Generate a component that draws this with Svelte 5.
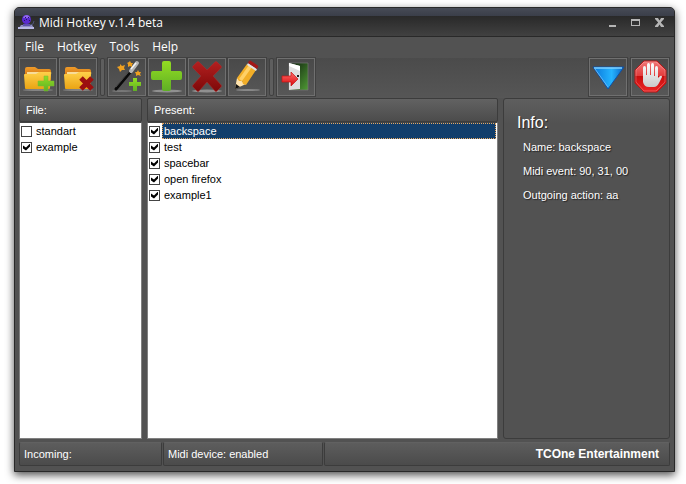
<script>
  let menus = ['File', 'Hotkey', 'Tools', 'Help'];

  let files = $state([
    { name: 'standart', on: false },
    { name: 'example', on: true }
  ]);

  let presets = $state([
    { name: 'backspace', on: true, event: '90, 31, 00', action: 'aa' },
    { name: 'test', on: true, event: '', action: '' },
    { name: 'spacebar', on: true, event: '', action: '' },
    { name: 'open firefox', on: true, event: '', action: '' },
    { name: 'example1', on: true, event: '', action: '' }
  ]);

  let selected = $state(0);
  let current = $derived(presets[selected]);
  let enabled = $state(true);
</script>

{#snippet folder()}
  <ellipse cx="19" cy="32" rx="15" ry="1" fill="#999" opacity=".7" />
  <path d="M6 11q0-2 2-2h8l3 2h11q2 0 2 2v9H6z" fill="url(#flap)" />
  <path d="M8 14h23v3H8z" fill="#f8dc9a" />
  <path d="M5 17q0-1 1-1h11l3-2h11q2 0 1 2l-1 14q0 1-1 1H7q-1 0-1-1z" fill="url(#gold)" />
{/snippet}

<svg class="defs" aria-hidden="true">
  <defs>
    <linearGradient id="flap" x2="0" y2="1"><stop stop-color="#ef9b28" /><stop offset="1" stop-color="#c76810" /></linearGradient>
    <linearGradient id="gold" x2="0" y2="1"><stop stop-color="#ffd04a" /><stop offset="1" stop-color="#eaa414" /></linearGradient>
    <linearGradient id="green" x2="0" y2="1"><stop stop-color="#93dd22" /><stop offset="1" stop-color="#5faf25" /></linearGradient>
    <linearGradient id="red" x2="0" y2="1"><stop stop-color="#b32020" /><stop offset="1" stop-color="#7d0808" /></linearGradient>
    <linearGradient id="blue" x2="1" y2="0"><stop stop-color="#0874d8" /><stop offset=".6" stop-color="#25b4ff" /><stop offset="1" stop-color="#0b62c4" /></linearGradient>
    <linearGradient id="stop" x2="0" y2="1"><stop stop-color="#f07878" /><stop offset=".48" stop-color="#e33b3b" /><stop offset=".5" stop-color="#c90d0d" /><stop offset="1" stop-color="#ed2525" /></linearGradient>
    <linearGradient id="palm" x2="0" y2="1"><stop stop-color="#fff" /><stop offset="1" stop-color="#c9c9c9" /></linearGradient>
    <linearGradient id="exit" x2="1" y2="1"><stop stop-color="#0c1a0c" /><stop offset="1" stop-color="#4f9a34" /></linearGradient>
    <linearGradient id="arrow" x2="0" y2="1"><stop stop-color="#ff6b6b" /><stop offset="1" stop-color="#d90c0c" /></linearGradient>
  </defs>
</svg>

<div class="desktop">
  <div class="window">
    <header class="titlebar">
      <svg class="logo" width="17" height="16" viewBox="0 0 17 16" aria-hidden="true">
        <path d="M3 11h11l2 3H1z" fill="#8f8fc4" />
        <path d="M0 13h16v2H0z" fill="#b9b9e6" />
        <path d="M12 11q4 0 4-4" fill="none" stroke="#4d5578" />
        <path d="M5 10h7v2H5z" fill="#5d4fae" />
        <circle cx="8.500" cy="5.500" r="4.500" fill="#5a2bd0" />
        <path d="M5 4q1-3 4-3 2 0 3 3z" fill="#8f68ee" />
        <path d="M7 3h1v1H7zM10 3h1v1h-1zM6 6h1v1H6zM8 5h1v1H8zM11 6h1v1h-1z" fill="#271064" />
      </svg>
      <h1>Midi Hotkey v.1.4 beta</h1>
      <div class="controls">
        <button aria-label="Minimize"><svg width="9" height="9" viewBox="0 0 9 9"><path d="M1 7h7v2H1z" fill="#b5b5b5" /></svg></button>
        <button aria-label="Maximize"><svg width="9" height="9" viewBox="0 0 9 9"><path d="M0 1h9v7H0zM1 3v4h7V3z" fill="#b5b5b5" fill-rule="evenodd" /></svg></button>
        <button aria-label="Close"><svg width="11" height="9" viewBox="0 0 11 9"><path d="M1 0h3l1.500 2.500L7 0h3v1L6.800 4.500 10 8v1H7L5.500 6.500 4 9H1V8l3.200-3.500L1 1z" fill="#b5b5b5" /></svg></button>
      </div>
    </header>

    <nav class="menu">
      {#each menus as item}
        <button>{item}</button>
      {/each}
    </nav>

    <div class="toolbar">
      <button class="tool" aria-label="Add file">
        <svg viewBox="0 0 38 38">
          {@render folder()}
          <path d="M25 18h4v5h6v5h-6v5h-4v-5h-6v-5h6z" fill="url(#green)" stroke="#79bb36" stroke-width=".5" />
        </svg>
      </button>
      <button class="tool" aria-label="Delete file">
        <svg viewBox="0 0 38 38">
          {@render folder()}
          <path d="M22 20l11 11M33 20L22 31" stroke="#9c1010" stroke-width="5" />
        </svg>
      </button>
      <span class="sep"></span>
      <button class="tool" aria-label="Hotkey wizard">
        <svg viewBox="0 0 38 38">
          <ellipse cx="14" cy="33" rx="10" ry="1" fill="#999" opacity=".5" />
          <path d="M8 31L29 6" stroke="#0a0a0a" stroke-width="3" stroke-linecap="round" />
          <path d="M8 29L24 10" stroke="#555" stroke-width=".8" />
          <path d="M23 13L29 5" stroke="#b4b4b4" stroke-width="4" stroke-linecap="round" />
          <path d="M23 11L28 5" stroke="#f4f4f4" stroke-width="1.500" />
          <path d="M12 6l2 2 3-1-1 3 1 2-3 0-2 2-1-3-2-2 3-1zM22 3l1 2 2 0-1 2 0 2-2-1-2 1 0-3-1-1 2-1zM30 12l1 2 2 0-1 2 1 2-3-1-2 1 0-2-1-2 2 0z" fill="#eea020" />
          <path d="M25 20h4v4h4v4h-4v5h-4v-5h-4v-4h4z" fill="url(#green)" />
        </svg>
      </button>
      <button class="tool" aria-label="Add hotkey">
        <svg viewBox="0 0 38 38">
          <ellipse cx="19" cy="33" rx="15" ry="1.500" fill="#aaa" opacity=".7" />
          <path d="M16 3h5q2 0 2 2v8h9q2 0 2 2v5q0 2-2 2h-9v9q0 2-2 2h-5q-2 0-2-2v-9H5q-2 0-2-2v-5q0-2 2-2h9V5q0-2 2-2z" fill="url(#green)" />
        </svg>
      </button>
      <button class="tool" aria-label="Delete hotkey">
        <svg viewBox="0 0 38 38">
          <ellipse cx="19" cy="33" rx="15" ry="1.500" fill="#aaa" opacity=".7" />
          <path d="M9 4q1-1 2 0l8 8 8-8q1-1 2 0l4 4q1 1 0 2l-8 8 8 9q1 1 0 2l-4 4q-1 1-2 0l-8-9-8 9q-1 1-2 0l-4-4q-1-1 0-2l8-9-8-8q-1-1 0-2z" fill="url(#red)" stroke="#b32a2a" stroke-width=".5" />
        </svg>
      </button>
      <button class="tool" aria-label="Edit hotkey">
        <svg viewBox="0 0 38 38">
          <ellipse cx="20" cy="32" rx="12" ry="1" fill="#aaa" opacity=".6" />
          <path d="M7 31L9 20l9 6z" fill="#ffe3ad" />
          <path d="M7 31l1-5 4 3z" fill="#111" />
          <path d="M9 20L19 6l9 6-10 15-3-1-1-3-3 0z" fill="#f2ae28" />
          <path d="M11 21L21 7l3 2-10 14z" fill="#ffd067" />
          <path d="M19 7l1-2 9 6-1 2z" fill="#e2e2e2" />
          <path d="M20 5l1-2q1-1 2 0l6 4q2 1 1 2l-1 2z" fill="#a31717" />
        </svg>
      </button>
      <span class="sep"></span>
      <button class="tool" aria-label="Exit">
        <svg viewBox="0 0 38 38">
          <path d="M12 5h19v27H12z" fill="url(#exit)" stroke="#777" stroke-width=".7" />
          <path d="M12 5l11 3v23l-11 1z" fill="#dedede" />
          <path d="M12 5l11 3v5L12 8z" fill="#fff" />
          <path d="M20 17h2v2h-2z" fill="#222" />
          <path d="M5 18h9v-4l7 7-7 7v-4H5z" fill="url(#arrow)" stroke="#c51313" stroke-width=".7" />
        </svg>
      </button>
      <div class="right">
        <button class="tool" aria-label="Minimize to tray">
          <svg viewBox="0 0 38 38">
            <path d="M4 9h31L19 31z" fill="url(#blue)" stroke="#0e50a5" />
            <path d="M5 10h28" stroke="#7fd0ff" stroke-width="1.500" />
            <path d="M6 11L19 29" stroke="#64b6f5" />
          </svg>
        </button>
        <button class="tool" aria-label="Stop" onclick={() => enabled = !enabled}>
          <svg viewBox="0 0 38 38">
            <path d="M13 3h13l9 9v13l-9 9H13l-9-9V12z" fill="url(#stop)" stroke="#b91515" />
            <path d="M13 4h12l9 8v12l-9 9H13l-8-9V12z" fill="none" stroke="#fff" stroke-width=".6" opacity=".4" />
            <path d="M12 21V10q0-2 1.500-2T15 10v7h1V7q0-2 1.500-2T19 7v10h1V7q0-2 1.500-2T23 7v11h1V10q0-2 1.500-2T27 10v10l2-2q2-1 2 1l-3 6q-2 4-5 4h-5q-5 0-6-5z" fill="url(#palm)" />
          </svg>
        </button>
      </div>
    </div>

    <main>
      <section class="panel">
        <h2>File:</h2>
        <ul class="list">
          {#each files as file, i}
            <li>
              <input id="file-{i}" type="checkbox" bind:checked={file.on}>
              <label for="file-{i}">{file.name}</label>
            </li>
          {/each}
        </ul>
      </section>

      <section class="panel">
        <h2>Present:</h2>
        <ul class="list">
          {#each presets as preset, i}
            <li class:selected={i === selected}>
              <input id="preset-{i}" type="checkbox" bind:checked={preset.on} onfocus={() => selected = i}>
              <label for="preset-{i}">{preset.name}</label>
            </li>
          {/each}
        </ul>
      </section>

      <section class="info">
        <h3>Info:</h3>
        <p>Name: {current.name}</p>
        <p>Midi event: {current.event}</p>
        <p>Outgoing action: {current.action}</p>
      </section>
    </main>

    <footer>
      <div class="cell">Incoming:</div>
      <div class="cell">Midi device: {enabled ? 'enabled' : 'disabled'}</div>
      <div class="cell brand">TCOne Entertainment</div>
    </footer>
  </div>
</div>

<style>
  :global(body) {
    background: #fff;
  }

  .defs {
    position: absolute;
    width: 0;
    height: 0;
  }

  .desktop {
    box-sizing: border-box;
    min-height: 100vh;
    padding: 7px 11px 12px 14px;
    display: flex;
    font-family: "Liberation Sans", Arial, sans-serif;
    font-size: 11px;
    color: #fff;
  }

  .window {
    flex: 1;
    display: flex;
    flex-direction: column;
    border: 1px solid #292929;
    border-radius: 5px 5px 0 0;
    background: #525252;
    box-shadow: 0 3px 9px rgba(0, 0, 0, 0.7);
    overflow: hidden;
  }

  button {
    padding: 0;
    border: 0;
    background: none;
    color: inherit;
    font: inherit;
  }

  h1, h2, h3, p, ul {
    margin: 0;
    padding: 0;
    font-weight: normal;
  }

  .titlebar {
    display: flex;
    align-items: center;
    gap: 4px;
    height: 28px;
    padding: 0 9px 0 3px;
    border-bottom: 1px solid #292929;
    background: linear-gradient(#474b56, #3a3e49 8px, #292929 8px, #414141);
  }

  h1 {
    flex: 1;
    font: 12px "Open Sans", sans-serif;
  }

  .controls {
    display: flex;
    gap: 14px;
    align-items: center;
  }

  .controls button {
    display: flex;
  }

  .menu {
    display: flex;
    align-items: flex-start;
    gap: 13px;
    height: 21px;
    padding-left: 10px;
    font: 12px/20px "Open Sans", sans-serif;
  }

  .toolbar {
    display: flex;
    align-items: center;
    gap: 2px;
    margin: 0 4px;
    padding-bottom: 2px;
    background: linear-gradient(#4b4b4b, #565656);
  }

  .tool {
    box-sizing: border-box;
    width: 38px;
    height: 38px;
    border: 1px solid #707070;
    background: linear-gradient(#494949, #575757);
    box-shadow: 0 0 0 1px #414141;
  }

  .tool svg {
    display: block;
    margin: -1px;
    width: 38px;
    height: 38px;
  }

  .sep {
    box-sizing: border-box;
    width: 5px;
    height: 38px;
    margin: 0 1px;
    border: 1px solid #404040;
    border-radius: 2px;
    background: #5e5e5e;
  }

  .right {
    display: flex;
    gap: 4px;
    margin-left: auto;
    padding-right: 1px;
  }

  main {
    flex: 1;
    display: grid;
    grid-template-columns: 123px 1fr 167px;
    gap: 5px;
    padding: 0 4px;
  }

  .panel {
    display: flex;
    flex-direction: column;
  }

  h2 {
    box-sizing: border-box;
    height: 24px;
    padding-left: 6px;
    border: 1px solid #3c3c3c;
    border-radius: 2px;
    background: linear-gradient(#626262, #4c4c4c);
    font-size: 11px;
    line-height: 22px;
  }

  .list {
    flex: 1;
    padding: 0 1px;
    border: 1px solid #808080;
    border-top-color: #444;
    background: #fff;
    color: #000;
    list-style: none;
  }

  li {
    display: flex;
    align-items: center;
    gap: 2px;
    height: 16px;
  }

  li label {
    flex: 1;
    padding-left: 1px;
    border: 1px solid transparent;
    line-height: 14px;
  }

  .selected label {
    border: 1px dotted #e8a860;
    background: #123e6b;
    color: #fff;
  }

  input {
    appearance: none;
    box-sizing: border-box;
    width: 11px;
    height: 11px;
    margin: 0;
    border: 1px solid #444;
    background: #fff;
  }

  input:checked::before {
    content: '';
    display: block;
    width: 7px;
    height: 7px;
    margin: 1px;
    background: #000;
    clip-path: polygon(0 2px, 3px 4px, 7px 0, 7px 3px, 3px 7px, 0 5px);
  }

  .info {
    padding: 14px 13px;
    border: 1px solid #3c3c3c;
    border-radius: 3px;
    background: linear-gradient(#5e5e5e, #525252 24px);
    text-shadow: 1px 1px 1px #222;
  }

  h3 {
    font-size: 16px;
    line-height: 20px;
  }

  p {
    padding-left: 6px;
    line-height: 24px;
    white-space: nowrap;
  }

  h3 + p {
    margin-top: 2px;
  }

  footer {
    display: grid;
    grid-template-columns: 143px 160px 1fr;
    gap: 1px;
    padding: 3px 4px 5px;
  }

  .cell {
    padding-left: 4px;
    border: 1px solid #3c3c3c;
    border-top-color: #616161;
    border-radius: 2px;
    background: linear-gradient(#5d5d5d, #4b4b4b);
    line-height: 22px;
  }

  .brand {
    padding-right: 10px;
    font-size: 12px;
    font-weight: bold;
    text-align: right;
  }
</style>
